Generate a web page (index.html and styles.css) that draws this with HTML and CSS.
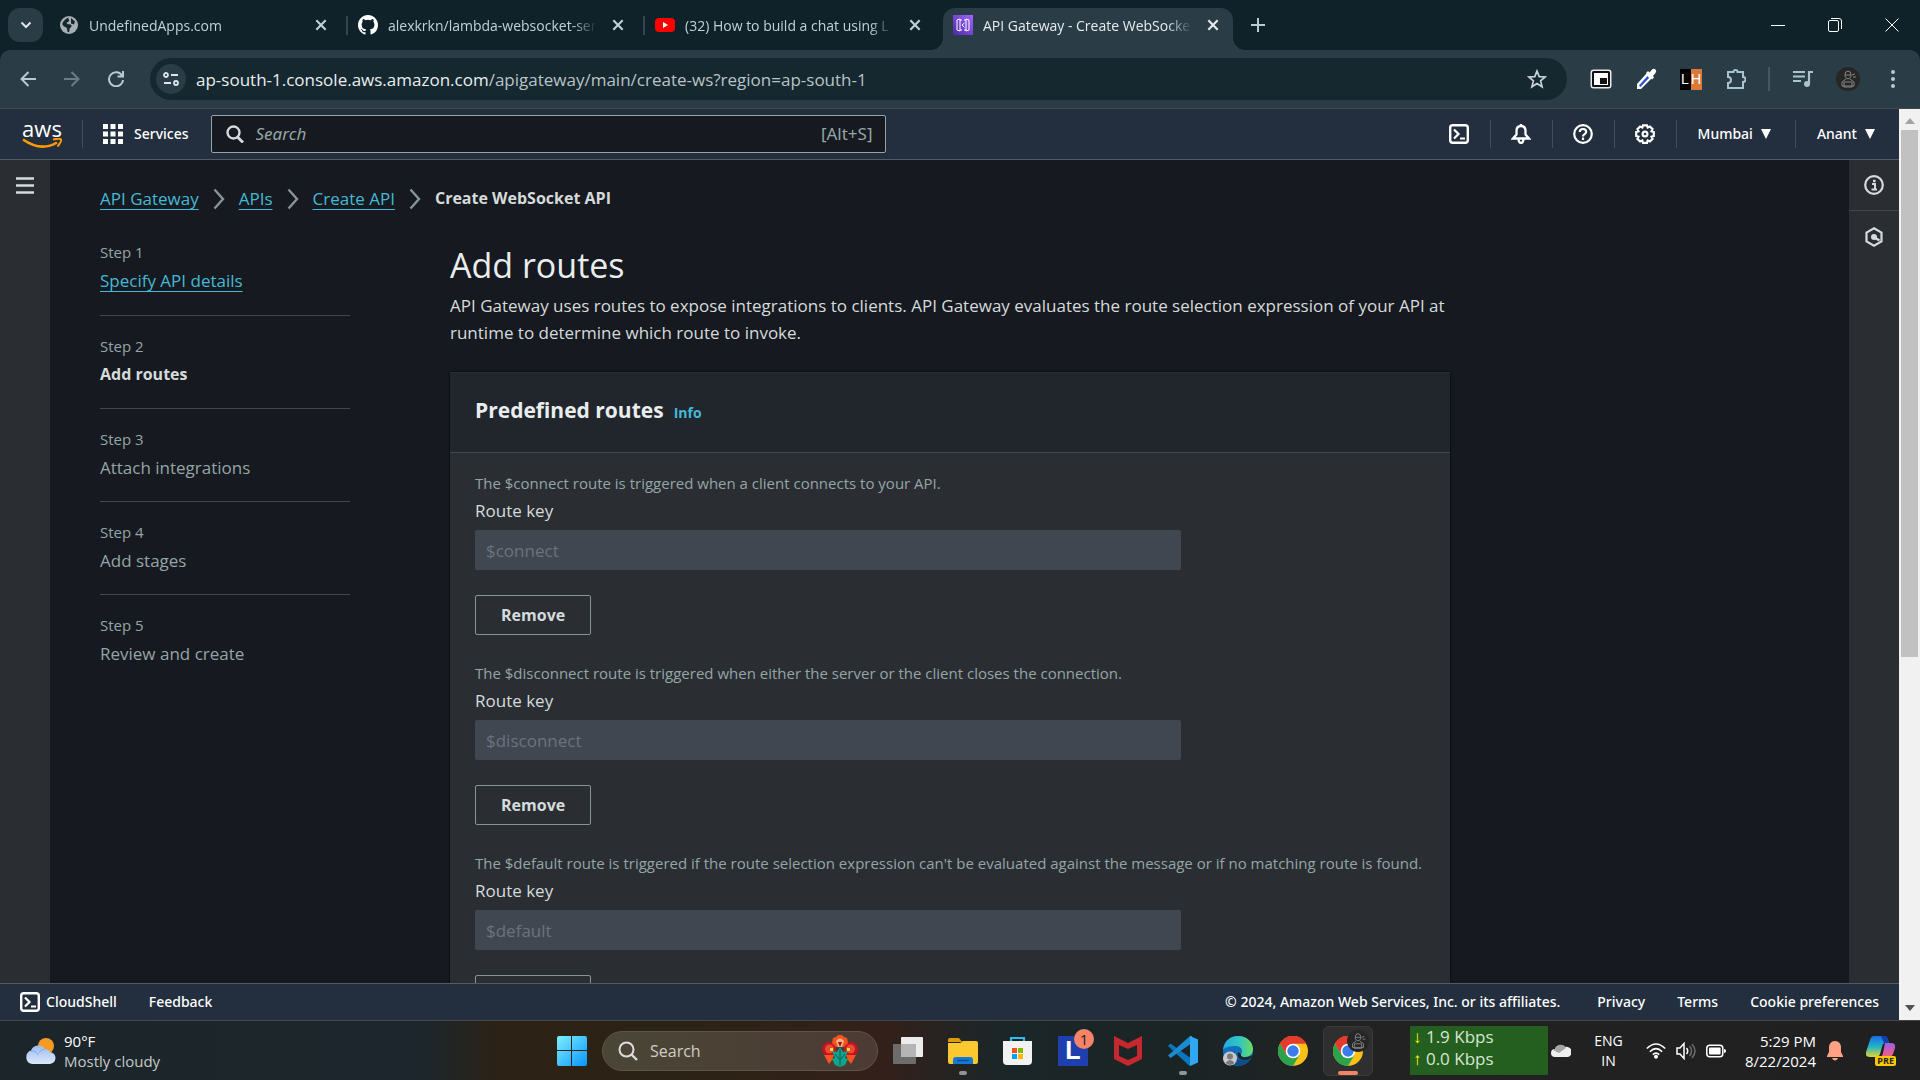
FILE: index.html
```html
<!DOCTYPE html>
<html lang="en">
<head>
<meta charset="utf-8">
<title>API Gateway - Create WebSocket API</title>
<link rel="stylesheet" href="styles.css">
</head>
<body>
<svg class="defs" aria-hidden="true">
  <symbol id="close" viewBox="0 0 12 12"><path d="M2 2l8 8M10 2l-8 8" stroke="currentColor" stroke-width="1.8" fill="none"/></symbol>
  <symbol id="crumb" viewBox="0 0 12 22"><path d="M1.500 1.500l8.500 9.500-8.500 9.500" stroke="#879596" stroke-width="2.400" fill="none"/></symbol>
  <symbol id="shell" viewBox="0 0 20 20"><rect x="1.200" y="1.200" width="17.600" height="17.600" rx="2.500" stroke="currentColor" stroke-width="2.400" fill="none"/><path d="M5 5.500l4.500 4.500L5 14.500M11 14.500h5" stroke="currentColor" stroke-width="2.200" fill="none"/></symbol>
  <symbol id="chrome" viewBox="0 0 30 30"><circle cx="15" cy="15" r="15" fill="#fbc116"/><path d="M15 15L2 7.500A15 15 0 0 1 28 7.500H15z" fill="#e33b2e"/><path d="M2 7.500A15 15 0 0 0 15 30L21.500 18.700 15 15 8.500 18.700z" fill="#2ba24c"/><path d="M2 7.500A15 15 0 0 1 28 7.500H15L8.500 18.700z" fill="#e33b2e"/><circle cx="15" cy="15" r="7.300" fill="#fff"/><circle cx="15" cy="15" r="5.700" fill="#3b7ded"/></symbol>
  <symbol id="ninja" viewBox="0 0 24 24"><circle cx="12" cy="12" r="12" fill="#262626"/><g fill="none" stroke="#858585" stroke-width="1"><path d="M9 8a3 4 0 0 1 6 0c0 5-6 5-6 0zM9 8h6M10 12l-4 3v4h12v-4l-4-3M8 15h8v5H8zM16 8l3-1M17 10h3"/></g></symbol>
  <symbol id="caret" viewBox="0 0 10 10"><path d="M0 0h10L5 10z" fill="currentColor"/></symbol>
</svg>

<header class="tabstrip">
  <button class="tab-search" aria-label="Search tabs"><svg width="12" height="12" viewBox="0 0 12 12"><path d="M1.500 3.500L6 8l4.500-4.500" stroke="#e0e6e8" stroke-width="2" fill="none"/></svg></button>
  <nav class="tabs">
    <div class="tab">
      <svg width="20" height="20" viewBox="0 0 20 20"><circle cx="10" cy="10" r="9" fill="#a7adb3"/><path d="M10 2.500c-2 1 1 2 0 3.500s-3 1-2 2.500 4 0 4.500 2-2 2-2 4-.5 3-1.500 2.500-.5-2-1-3.500-4-2-4.500-4S6 3.500 10 2.500zM12 3l4 3.500-1 3-3-1z" fill="#14262e"/></svg>
      <span class="tab-title">UndefinedApps.com</span>
      <button class="tab-close" aria-label="Close tab"><svg width="14" height="14"><use href="#close"/></svg></button>
    </div>
    <div class="tab">
      <svg width="20" height="20" viewBox="0 0 16 16"><path fill="#fff" d="M8 0C3.580 0 0 3.580 0 8c0 3.540 2.290 6.530 5.470 7.590.4.070.55-.17.55-.38v-1.490c-2.010.37-2.530-.49-2.690-.94-.09-.23-.48-.94-.82-1.130-.28-.15-.68-.52-.01-.53.63-.01 1.080.58 1.230.82.72 1.210 1.870.87 2.330.66.07-.52.28-.87.51-1.070-1.780-.2-3.640-.89-3.640-3.950 0-.87.31-1.590.82-2.150-.08-.2-.36-1.020.08-2.120 0 0 .67-.21 2.200.82a7.600 7.600 0 0 1 4 0c1.530-1.040 2.200-.82 2.200-.82.44 1.100.16 1.920.08 2.120.51.56.82 1.270.82 2.150 0 3.070-1.870 3.750-3.650 3.950.29.25.54.73.54 1.480v2.200c0 .21.15.46.55.38A8 8 0 0 0 16 8c0-4.420-3.580-8-8-8z"/></svg>
      <span class="tab-title">alexkrkn/lambda-websocket-ser</span>
      <button class="tab-close" aria-label="Close tab"><svg width="14" height="14"><use href="#close"/></svg></button>
    </div>
    <div class="tab">
      <svg width="20" height="20" viewBox="0 0 20 20"><rect y="3" width="20" height="14" rx="4" fill="#f00"/><path d="M8 7l5 3-5 3z" fill="#fff"/></svg>
      <span class="tab-title">(32) How to build a chat using L</span>
      <button class="tab-close" aria-label="Close tab"><svg width="14" height="14"><use href="#close"/></svg></button>
    </div>
    <div class="tab active">
      <svg width="20" height="20" viewBox="0 0 20 20"><defs><linearGradient id="gw" x1="0" y1="1" x2="1" y2="0"><stop offset="0" stop-color="#4d27a8"/><stop offset="1" stop-color="#a166ff"/></linearGradient></defs><rect width="20" height="20" fill="url(#gw)"/><path d="M7 4L4 5v10l3 1zM13 4l3 1v10l-3 1zM7 5h2M11 5h2M7 15h2M11 15h2M11.500 8L9 10l2.500 2.500" stroke="#fff" stroke-width="1" fill="none"/></svg>
      <span class="tab-title">API Gateway - Create WebSocke</span>
      <button class="tab-close" aria-label="Close tab"><svg width="14" height="14"><use href="#close"/></svg></button>
    </div>
  </nav>
  <button class="new-tab" aria-label="New tab"><svg width="14" height="14" viewBox="0 0 14 14"><path d="M7 0v14M0 7h14" stroke="#b9cbd4" stroke-width="2"/></svg></button>
  <div class="window-buttons">
    <button aria-label="Minimize"><svg width="14" height="14" viewBox="0 0 14 14"><path d="M0 7.500h14" stroke="#fff"/></svg></button>
    <button aria-label="Restore"><svg width="14" height="14" viewBox="0 0 14 14"><rect x=".5" y="2.500" width="10" height="11" rx="1.500" stroke="#fff" fill="none"/><path d="M3 .5h8q2.500 0 2.500 2.500v8" stroke="#fff" fill="none"/></svg></button>
    <button aria-label="Close window"><svg width="14" height="14" viewBox="0 0 14 14"><path d="M.5.5l13 13M13.500.5l-13 13" stroke="#fff" fill="none"/></svg></button>
  </div>
</header>

<div class="toolbar">
  <div class="nav-buttons">
    <button aria-label="Back"><svg width="16" height="16" viewBox="0 0 16 16"><path d="M16 8H2M8.500 1L1.500 8l7 7" stroke="#b4cad4" stroke-width="2" fill="none"/></svg></button>
    <button aria-label="Forward"><svg width="16" height="16" viewBox="0 0 16 16"><path d="M0 8h14M7.500 1l7 7-7 7" stroke="#6c7d86" stroke-width="2" fill="none"/></svg></button>
    <button aria-label="Reload"><svg width="16" height="16" viewBox="0 0 16 16"><path d="M14 4.500A7 7 0 1 0 15 9M15 0v5.500H9.500" stroke="#b4cad4" stroke-width="2" fill="none"/></svg></button>
  </div>
  <div class="omnibox">
    <button class="site-info" aria-label="Site information"><svg width="16" height="16" viewBox="0 0 16 16" fill="none" stroke="#dce5e9" stroke-width="1.800"><circle cx="3" cy="4" r="2"/><path d="M8 4h7M1 12h7"/><circle cx="13" cy="12" r="2"/></svg></button>
    <span class="url">ap-south-1.console.aws.amazon.com<span class="path">/apigateway/main/create-ws?region=ap-south-1</span></span>
    <button aria-label="Bookmark this tab"><svg width="20" height="20" viewBox="0 0 20 20"><path d="M10 2l2.200 5.600 6 .4-4.600 3.900 1.500 5.900L10 14.500l-5.100 3.300 1.500-5.900L1.800 8l6-.4z" stroke="#c8d2d6" stroke-width="1.700" fill="none"/></svg></button>
  </div>
  <div class="extensions">
    <button aria-label="Picture in picture"><svg width="22" height="20" viewBox="0 0 22 20"><rect x=".5" y=".5" width="21" height="19" rx="3" fill="#e8eaed"/><rect x="2" y="2" width="18" height="16" rx="1.500" fill="#111"/><rect x="4" y="4" width="14" height="12" fill="#fff"/><rect x="10" y="9" width="7" height="6" fill="#111"/></svg></button>
    <button aria-label="Color picker"><svg width="22" height="22" viewBox="0 0 22 22"><path d="M12 5L2 16v5h4L17 10z" fill="#fff"/><path d="M12.500 8L4 17.500l1.500 1.500L14 10z" fill="#2a4fd0"/><path d="M11 5l2-2 1.500 1.500L17 1.500q2-1.500 3.500 0t0 3.500L18 8l1 1.500-2 2z" fill="#fff"/></svg></button>
    <button class="lh" aria-label="LH"><span>L</span><span>H</span></button>
    <button aria-label="Extensions"><svg width="20" height="22" viewBox="0 0 20 22"><path d="M2 4h5.500a2 2 0 0 1 4 0H17v5a2.500 2.500 0 0 1 0 5v6H2v-5a3 3 0 0 0 0-6z" fill="none" stroke="#a9c3cf" stroke-width="2"/></svg></button>
    <i class="divider"></i>
    <button aria-label="Media controls"><svg width="20" height="18" viewBox="0 0 20 18"><path d="M0 2h12M0 6.500h12M0 11h8" stroke="#a9c3cf" stroke-width="2"/><path d="M16 14V2h4" stroke="#a9c3cf" stroke-width="2.200" fill="none"/><circle cx="14" cy="14" r="3" fill="#a9c3cf"/></svg></button>
    <button aria-label="Profile"><svg width="24" height="24"><use href="#ninja"/></svg></button>
    <button aria-label="Menu"><svg width="6" height="20" viewBox="0 0 6 20" fill="#b4cad4"><circle cx="3" cy="3" r="2"/><circle cx="3" cy="10" r="2"/><circle cx="3" cy="17" r="2"/></svg></button>
  </div>
</div>

<div class="viewport">
  <div class="page">
    <header class="aws-nav">
      <a class="aws-logo" href="#" aria-label="AWS"><span>aws</span><svg width="40" height="11" viewBox="0 0 40 11"><path d="M1 1.500Q19 14 35 4.500" stroke="#f90" stroke-width="2.600" fill="none"/><path d="M31 1.500q7-1.500 8 0t-3.500 7" stroke="#f90" stroke-width="2" fill="none"/></svg></a>
      <i class="divider"></i>
      <button class="services"><svg width="20" height="20" viewBox="0 0 20 20" fill="#fff"><path d="M0 0h5v5H0zM7.500 0h5v5h-5zM15 0h5v5h-5zM0 7.500h5v5H0zM7.500 7.500h5v5h-5zM15 7.500h5v5h-5zM0 15h5v5H0zM7.500 15h5v5h-5zM15 15h5v5h-5z"/></svg>Services</button>
      <label class="aws-search"><svg width="18" height="18" viewBox="0 0 18 18"><circle cx="7.500" cy="7.500" r="6" stroke="#d5dbdb" stroke-width="2.400" fill="none"/><path d="M11.500 12l5.500 5.500" stroke="#d5dbdb" stroke-width="2.800"/></svg><input type="text" placeholder="Search" aria-label="Search"><span>[Alt+S]</span></label>
      <div class="aws-tools">
        <button aria-label="CloudShell"><svg width="20" height="20"><use href="#shell"/></svg></button>
        <button aria-label="Notifications"><svg width="20" height="20" viewBox="0 0 20 20" fill="none" stroke="#fff" stroke-width="2.300"><path d="M10 2C6.500 2 5.500 4.500 5.500 7v3.500L2 14.500h16l-3.500-4V7c0-2.500-1-5-4.500-5zM10 0v2M7.500 15a2.500 4 0 0 0 5 0"/></svg></button>
        <button aria-label="Support"><svg width="20" height="20" viewBox="0 0 20 20" fill="none" stroke="#fff" stroke-width="2.200"><circle cx="10" cy="10" r="8.800"/><path d="M6.800 8c0-4 6.400-4 6.400 0 0 2.300-3.200 2-3.200 4.500M10 13.500V16"/></svg></button>
        <button aria-label="Settings"><svg width="20" height="20" viewBox="0 0 20 20" fill="none" stroke="#fff" stroke-width="2.200"><path d="M8 1.300h4l.7 2.200 2.200-1 2.600 2.600-1 2.200 2.300.7v4l-2.300.7 1 2.200-2.600 2.600-2.200-1-.7 2.300H8l-.7-2.300-2.200 1-2.600-2.600 1-2.200-2.300-.7V8l2.300-.7-1-2.200 2.600-2.600 2.200 1z"/><circle cx="10" cy="10" r="2.400"/></svg></button>
        <button class="menu">Mumbai<svg width="10" height="10"><use href="#caret"/></svg></button>
        <button class="menu">Anant<svg width="10" height="10"><use href="#caret"/></svg></button>
      </div>
    </header>

    <div class="workspace">
      <aside class="rail left"><button aria-label="Open navigation"><svg width="18" height="18" viewBox="0 0 18 18"><path d="M0 1.500h18M0 8.500h18M0 15.500h18" stroke="#d5dbdb" stroke-width="2.600"/></svg></button></aside>
      <main class="content">
        <nav class="breadcrumb" aria-label="Breadcrumb">
          <a href="#">API Gateway</a><svg width="12" height="22"><use href="#crumb"/></svg>
          <a href="#">APIs</a><svg width="12" height="22"><use href="#crumb"/></svg>
          <a href="#">Create API</a><svg width="12" height="22"><use href="#crumb"/></svg>
          <strong>Create WebSocket API</strong>
        </nav>
        <div class="wizard">
          <ol class="steps">
            <li><small>Step 1</small><a href="#">Specify API details</a></li>
            <li><small>Step 2</small><strong>Add routes</strong></li>
            <li><small>Step 3</small><span>Attach integrations</span></li>
            <li><small>Step 4</small><span>Add stages</span></li>
            <li><small>Step 5</small><span>Review and create</span></li>
          </ol>
          <section class="form">
            <h1>Add routes</h1>
            <p class="intro">API Gateway uses routes to expose integrations to clients. API Gateway evaluates the route selection expression of your API at runtime to determine which route to invoke.</p>
            <div class="card">
              <div class="card-head"><h2>Predefined routes</h2><a href="#">Info</a></div>
              <div class="card-body">
                <div class="route"><p>The $connect route is triggered when a client connects to your API.</p><label for="r1">Route key</label><input id="r1" value="$connect" disabled><button>Remove</button></div>
                <div class="route"><p>The $disconnect route is triggered when either the server or the client closes the connection.</p><label for="r2">Route key</label><input id="r2" value="$disconnect" disabled><button>Remove</button></div>
                <div class="route"><p>The $default route is triggered if the route selection expression can't be evaluated against the message or if no matching route is found.</p><label for="r3">Route key</label><input id="r3" value="$default" disabled><button>Remove</button></div>
              </div>
            </div>
          </section>
        </div>
      </main>
      <aside class="rail right">
        <button aria-label="Info"><svg width="20" height="20" viewBox="0 0 20 20"><circle cx="10" cy="10" r="8.800" stroke="#d5dbdb" stroke-width="2.200" fill="none"/><path d="M8 9h3v5M7.500 14.500h5.500" stroke="#d5dbdb" stroke-width="2" fill="none"/><rect x="9" y="4.800" width="2.600" height="2.400" fill="#d5dbdb"/></svg></button>
        <button aria-label="Amazon Q"><svg width="20" height="20" viewBox="0 0 20 20"><path d="M10 1.300l7.500 4.300v8.800L10 18.700l-7.500-4.300V5.600z" stroke="#d5dbdb" stroke-width="2.200" fill="none"/><circle cx="10" cy="10" r="3" fill="#d5dbdb"/><path d="M10.500 10.500l5 3" stroke="#d5dbdb" stroke-width="2.500"/></svg></button>
      </aside>
    </div>

    <footer class="aws-footer">
      <button><svg width="20" height="20"><use href="#shell"/></svg>CloudShell</button>
      <a class="feedback" href="#">Feedback</a>
      <span class="legal">© 2024, Amazon Web Services, Inc. or its affiliates.</span>
      <a href="#">Privacy</a><a href="#">Terms</a><a href="#">Cookie preferences</a>
    </footer>
  </div>
  <div class="scrollbar" aria-hidden="true"><svg width="10" height="6" viewBox="0 0 10 6"><path d="M0 6L5 0l5 6z" fill="#a3a3a3"/></svg><i></i><svg class="down" width="10" height="6" viewBox="0 0 10 6"><path d="M0 0l5 6 5-6z" fill="#505050"/></svg></div>
</div>

<footer class="taskbar">
  <div class="weather">
    <svg width="32" height="28" viewBox="0 0 32 28"><defs><linearGradient id="cl" x1="0" y1="0" x2="0" y2="1"><stop offset="0" stop-color="#9dbcf0"/><stop offset="1" stop-color="#dce8fb"/></linearGradient></defs><circle cx="22" cy="9" r="8" fill="#f59a23"/><path d="M8 27a7 7 0 0 1-1-13.500A8 8 0 0 1 21 12a6 6 0 0 1 5 3 6 6 0 0 1-1 12z" fill="url(#cl)"/><path d="M7 14a6 6 0 0 1 7 4M21 12a7 7 0 0 0-6 4" stroke="#86a8e2" fill="none"/></svg>
    <div>90°F<span>Mostly cloudy</span></div>
  </div>
  <div class="apps">
    <button aria-label="Start"><svg width="30" height="30" viewBox="0 0 30 30"><defs><linearGradient id="wn" x1="0" y1="0" x2="1" y2="1"><stop offset="0" stop-color="#7df0ff"/><stop offset="1" stop-color="#0a94ff"/></linearGradient></defs><path d="M0 2q0-2 2-2h12v14H0zM15 0h13q2 0 2 2v12H15zM0 15h14v15H2q-2 0-2-2zM15 15h15v13q0 2-2 2H15z" fill="url(#wn)"/></svg></button>
    <label class="task-search"><svg width="20" height="20" viewBox="0 0 20 20"><circle cx="8.500" cy="8.500" r="7" stroke="#dcdcdc" stroke-width="2" fill="none"/><path d="M13.500 13.500l5.500 5.500" stroke="#dcdcdc" stroke-width="2.400"/></svg><input type="text" placeholder="Search" aria-label="Search Windows"><svg width="36" height="32" viewBox="0 0 36 32"><g fill="#c3141c"><circle cx="7" cy="14" r="7"/><circle cx="29" cy="14" r="7"/></g><g fill="#f4551f"><path d="M10 8l1-5 3-1 2-2h4l2 2 3 1 1 5-4 4h-8zM2 20h10l-2 5-3 4zM34 20H24l2 5 3 4z"/></g><circle cx="7.500" cy="14" r="4.500" fill="#e9483c"/><circle cx="28.500" cy="14" r="4.500" fill="#e9483c"/><path d="M14 6q4-5 8 0l-2 6h-4z" fill="#ffb08a"/><path d="M16 7h4l-2 5z" fill="#8f1315"/><path d="M18 12l3 5 5-1-3 7 3 1-3 6-5 2-5-2-3-6 3-1-3-7 5 1z" fill="#13a58b"/><path d="M18 14v17M13 19l5 6 5-6" stroke="#075e5e" fill="none"/><path d="M8 13h3v3H8zM25 13h3v3h-3z" fill="#ffd51f"/></svg></label>
    <button aria-label="Task view"><svg width="30" height="28" viewBox="0 0 30 28"><rect x="8" y="0" width="22" height="20" rx="1" fill="#ececec"/><rect y="7" width="23" height="20" rx="1" fill="#6c6c6c"/><rect x="8" y="7" width="15" height="13" fill="#b5b5b5"/></svg></button>
    <button class="running" aria-label="File Explorer"><svg width="30" height="28" viewBox="0 0 30 28"><path d="M0 3q0-2 2-2h9l3 4H0z" fill="#dd9d0b"/><path d="M0 6h12l3-2h13q2 0 2 2v19q0 2-2 2H2q-2 0-2-2z" fill="#fcc82f"/><path d="M5 27v-4q0-3 3-3h14q3 0 3 3v4z" fill="#1279d6"/><path d="M9 23.500h12" stroke="#0b4f9b" stroke-width="1.500"/></svg></button>
    <button aria-label="Microsoft Store"><svg width="30" height="30" viewBox="0 0 30 30"><path d="M8 6V2h13v4" stroke="#2bbdf2" stroke-width="2.200" fill="none"/><path d="M0 5h29v20q0 4-4 4H4q-4 0-4-4z" fill="#f2f2f2"/><path d="M9 12h5v5H9z" fill="#f25022"/><path d="M15 12h5v5h-5z" fill="#7fba00"/><path d="M9 18h5v5H9z" fill="#00a4ef"/><path d="M15 18h5v5h-5z" fill="#ffb900"/></svg></button>
    <button class="l-app" aria-label="L"><span>L</span><b>1</b></button>
    <button aria-label="McAfee"><svg width="28" height="30" viewBox="0 0 28 30"><path d="M0 0l14 7L28 0v23l-14 7-14-7zM5 9v11l9 4 9-4V9l-9 4z" fill="#c5282d" fill-rule="evenodd"/></svg></button>
    <button class="running" aria-label="Visual Studio Code"><svg width="30" height="30" viewBox="0 0 30 30"><path d="M0 10l2.500-2.500L24 23v5.500L21.500 30z" fill="#0b76bd"/><path d="M0 19.500L2.500 22 24 7V0h-2z" fill="#1a8ad2"/><path d="M22 0l8 3.500v23L22 30z" fill="#2fa7f2"/></svg></button>
    <button aria-label="Microsoft Edge"><svg width="30" height="30" viewBox="0 0 30 30"><defs><linearGradient id="ed" x1="0" y1="0" x2="1" y2="0"><stop offset="0" stop-color="#25a8e0"/><stop offset=".5" stop-color="#2fc3c9"/><stop offset="1" stop-color="#69dc62"/></linearGradient></defs><circle cx="15" cy="15" r="15" fill="#1170bd"/><path d="M0 14C1 5 7 0 15 0c9 0 15 6 15 13 0 5-4 8-8 8-5 0-5-2-4-3 3-3 0-8-5-8C7 10 2 11 0 14z" fill="url(#ed)"/><path d="M12 15c-2 6 4 12 15 8-3 5-9 8-15 6-6-3-5-12 0-14z" fill="#114b8b"/><path d="M18 18c-1 3 4 5 12 1l-3 4c-9 3-14-1-12-7z" fill="#1c2426"/><circle cx="7" cy="22.500" r="7" fill="#c9c9c9"/><circle cx="7" cy="20.500" r="3" fill="#7a7a7a"/><path d="M2.500 27q4.500-6 9 0-4.500 4-9 0z" fill="#7a7a7a"/></svg></button>
    <button aria-label="Google Chrome"><svg width="30" height="30"><use href="#chrome"/></svg></button>
    <button class="current" aria-label="Google Chrome, second profile"><svg width="30" height="30"><use href="#chrome"/></svg><svg class="profile" width="22" height="22"><use href="#ninja"/></svg></button>
  </div>
  <div class="tray">
    <div class="speed"><span><i>↓</i> 1.9 Kbps</span><span><i>↑</i> 0.0 Kbps</span></div>
    <svg class="onedrive" width="20" height="14" viewBox="0 0 20 14"><path d="M4 13a4 4 0 0 1 0-8 6 6 0 0 1 10-2 5 5 0 0 1 3 10z" fill="#efefef"/><path d="M4 5a6 6 0 0 1 11-1l-7 5-6-3z" fill="#a5a5a5"/></svg>
    <div class="lang">ENG<span>IN</span></div>
    <div class="status">
      <svg width="20" height="16" viewBox="0 0 20 16" fill="none" stroke="#fff" stroke-width="1.600"><path d="M.8 5.500q9.200-9 18.400 0M3.800 8.700q6.200-6 12.400 0M6.800 11.700q3.200-3 6.400 0"/><circle cx="10" cy="13.800" r="1.200" fill="#fff"/></svg>
      <svg width="20" height="18" viewBox="0 0 20 18" fill="none" stroke="#fff" stroke-width="1.500"><path d="M1 6h3l4-4.500v15L4 12H1z"/><path d="M10.500 6q2.500 3 0 6"/><path d="M13.500 4q4 5 0 10M16 2q6 7 0 14" stroke="#6c6c6c"/></svg>
      <svg width="20" height="14" viewBox="0 0 20 14"><rect x=".8" y="1.300" width="16" height="11.400" rx="3" stroke="#fff" stroke-width="1.500" fill="none"/><rect x="3" y="3.500" width="11.600" height="7" rx="1" fill="#fff"/><path d="M18 5q2 0 2 2t-2 2z" fill="#fff"/></svg>
    </div>
    <div class="clock">5:29 PM<span>8/22/2024</span></div>
    <svg class="bell" width="16" height="20" viewBox="0 0 16 20"><path d="M8 0C4 0 2 3 2 6.500V11l-2 4v1h16v-1l-2-4V6.500C14 3 12 0 8 0z" fill="#ffa184"/><path d="M5 17h6q-1 2.500-3 2.500T5 17z" fill="#ffa184"/></svg>
    <button class="copilot" aria-label="Copilot"><svg width="30" height="22" viewBox="0 0 30 22"><defs><linearGradient id="c1" x1="0" y1="0" x2="0" y2="1"><stop offset="0" stop-color="#1a6be8"/><stop offset=".5" stop-color="#21b3c7"/><stop offset="1" stop-color="#e5d531"/></linearGradient><linearGradient id="c2" x1="0" y1="0" x2="0" y2="1"><stop offset="0" stop-color="#a05be8"/><stop offset="1" stop-color="#f7607d"/></linearGradient></defs><path d="M8 0h10q3 0 4 4l1 3h-4q-2 0-3 4l-2 7q-1 3-4 3H4q-5 0-4-5L4 4q1-4 4-4z" fill="url(#c1)"/><path d="M17 0q4 0 5 4l1 3h-5l-3-7z" fill="#123fae"/><path d="M19 7h6q5 0 4 5l-2 6q-1 3-5 3h-8q2 0 3-4z" fill="url(#c2)"/></svg><b>PRE</b></button>
  </div>
</footer>
</body>
</html>
```
FILE: styles.css
```css
* { box-sizing: border-box; }
html, body { height: 100%; margin: 0; }
body { display: flex; flex-direction: column; overflow: hidden; background: #0f222a; color: #d5dbdb; font: 17px/27px "Open Sans", "Noto Sans", sans-serif; }
button { border: 0; padding: 0; background: none; color: inherit; font: inherit; display: flex; align-items: center; justify-content: center; }
input { font: inherit; color: inherit; min-width: 0; }
svg { display: block; flex: none; }
.defs { position: absolute; width: 0; height: 0; }
h1, h2, p, ol { margin: 0; padding: 0; }
a { color: #44b9d6; }
input::placeholder { color: inherit; opacity: 1; }

/* Browser tabs */
.tabstrip, .toolbar, .taskbar { flex: none; }
.tabstrip { display: flex; height: 50px; color: #c3d0d6; font-size: 14px; }
.tab-search { width: 35px; height: 34px; margin: 8px 6px 0 8px; border-radius: 12px; background: #2a3c45; }
.tabs { display: flex; }
.tab { position: relative; display: flex; align-items: center; gap: 10px; width: 297px; padding: 0 18px 0 10px; }
.tab-title { flex: 1; overflow: hidden; white-space: nowrap; mask-image: linear-gradient(to right, #000 88%, transparent 100%); }
.tab-close { width: 14px; height: 50px; margin-left: 4px; }
.tab + .tab:not(.active) { padding-left: 12px; background: linear-gradient(#334650, #334650) no-repeat 0 16px / 2px 19px; }
.tab.active { margin-top: 8px; margin-left: 3px; width: 290px; padding: 0 13px 8px 10px; border-radius: 12px 12px 0 0; background: #2a3c45; color: #e6ecee; }
.tab.active .tab-close { height: 34px; }
.tab.active::before, .tab.active::after { content: ""; position: absolute; bottom: 0; width: 12px; height: 12px; }
.tab.active::before { left: -12px; background: radial-gradient(circle at 0 0, transparent 12px, #2a3c45 12px); }
.tab.active::after { right: -12px; background: radial-gradient(circle at 100% 0, transparent 12px, #2a3c45 12px); }
.new-tab { width: 50px; height: 42px; }
.window-buttons { display: flex; margin-left: auto; }
.window-buttons button { width: 57px; height: 49px; }
.new-tab { height: 50px; }

/* Address bar */
.toolbar { display: flex; align-items: center; height: 59px; padding: 0 5px 0 6px; border-bottom: 1px solid #46474a; background: #2a3c45; border-radius: 10px 10px 0 0; }
.nav-buttons { display: flex; }
.nav-buttons button { width: 44px; height: 40px; }
.omnibox { flex: 1; display: flex; align-items: center; height: 42px; margin-left: 12px; padding: 0 20px 0 6px; border-radius: 21px; background: #15272f; }
.site-info { width: 30px; height: 30px; margin-right: 10px; border-radius: 50%; background: #2a3c45; }
.url { flex: 1; color: #e8eef0; }
.path { color: #b9c3c7; }
.extensions { display: flex; align-items: center; margin-left: 11px; }
.extensions button { width: 45px; height: 40px; }
.extensions .divider { width: 2px; height: 24px; margin: 0 10px; background: #435964; }
.extensions .lh { color: #fff; font: 14px/21px "Liberation Sans", sans-serif; }
.lh span { width: 11px; background: #000; text-align: center; }
.lh span + span { background: #d9793a; }

/* Web page */
.viewport { flex: 1; min-height: 0; display: flex; background: #16191f; }
.page { flex: 1; min-width: 0; display: flex; flex-direction: column; }
.scrollbar { flex: none; display: flex; flex-direction: column; align-items: center; width: 21px; padding: 9px 0; background: #f1f1f1; }
.scrollbar i { width: 17px; height: 59%; margin-top: 6px; background: #c1c1c1; }
.scrollbar .down { margin-top: auto; }

.aws-nav, .aws-footer { flex: none; display: flex; align-items: center; background: #232f3e; color: #fff; font: 500 14px/20px "Noto Sans", sans-serif; }
.aws-nav { height: 51px; padding-left: 22px; border-bottom: 1px solid #545b64; }
.aws-logo { display: flex; flex-direction: column; align-items: center; width: 40px; color: #fff; text-decoration: none; font: 500 22px/17px "Open Sans", sans-serif; }
.aws-logo svg { margin-top: 1px; }
.aws-nav > .divider { width: 1px; height: 28px; margin: 0 20px; background: #414d5c; }
.services { gap: 11px; }
.aws-search { display: flex; align-items: center; gap: 12px; width: 675px; height: 38px; margin-left: 22px; padding: 0 12px 0 14px; border: 1px solid #95a5a6; border-radius: 2px; background: #16191f; color: #95a5a6; font-size: 17px; font-weight: 400; }
.aws-search input { flex: 1; border: 0; padding: 0; background: none; font-style: italic; }
.aws-tools { display: flex; align-items: center; margin-left: auto; }
.aws-tools button { width: 62px; height: 28px; }
.aws-tools button + button { border-left: 1px solid #414d5c; }
.aws-tools .menu { width: auto; gap: 8px; padding: 0 24px 0 21px; }

.workspace { flex: 1; min-height: 0; display: flex; }
.rail { flex: none; width: 50px; background: #2a2e33; }
.rail button { width: 50px; height: 51px; }
.rail.right button:first-child { border-bottom: 1px solid #414750; }
.content { flex: 1; min-width: 0; overflow: hidden; padding: 25px 50px 0; }
.breadcrumb { display: flex; align-items: center; }
.breadcrumb svg { margin: 0 14px; }
.breadcrumb a, .steps a { text-underline-offset: 4px; text-decoration-thickness: 1px; }
.wizard { display: grid; grid-template-columns: 250px minmax(0, 1000px); gap: 100px; padding-top: 26px; }
.steps { list-style: none; color: #95a5a6; }
.steps li { display: flex; flex-direction: column; height: 77px; }
.steps li + li { height: 93px; border-top: 1px solid #414750; padding-top: 16px; }
.steps small { font-size: 15px; line-height: 29px; }
.steps strong, .breadcrumb strong { color: #d5dbdb; font-size: 16px; }
.steps a, .steps span, .steps strong { align-self: flex-start; }
h1 { color: #eaeded; font-weight: 400; font-size: 34px; line-height: 54px; }
.intro { padding-bottom: 26px; }
.card { background: #2a2e33; box-shadow: 0 0 2px #000; }
.card-head { display: flex; align-items: baseline; gap: 10px; height: 81px; padding: 23px 25px; border-top: 1px solid #2a2e33; border-bottom: 1px solid #414750; background: #21252c; }
h2 { color: #eaeded; font-size: 21px; line-height: 28px; }
.card-head a { font-size: 14px; font-weight: 700; text-decoration: none; }
.card-body { padding: 16px 25px; }
.route { display: flex; flex-direction: column; align-items: flex-start; margin-bottom: 24px; }
.route p { color: #95a5a6; font-size: 15px; line-height: 28px; }
.route input { width: 706px; max-width: 100%; height: 40px; margin: 6px 0 25px; padding: 0 11px; border: 0; border-radius: 2px; background: #414750; color: #68737f; }
.route button { height: 40px; padding: 0 25px; border: 1px solid #879596; border-radius: 2px; font-size: 16px; font-weight: 700; }

.aws-footer { gap: 32px; height: 37px; padding: 0 20px; border-top: 1px solid #545b64; }
.aws-footer a { color: inherit; text-decoration: none; }
.aws-footer button { gap: 6px; }
.legal { margin: 0 5px 0 auto; }

/* Windows taskbar */
.taskbar { display: grid; grid-template-columns: 1fr auto 1fr; align-items: center; height: 60px; border-top: 1px solid #46474a; color: #fff; font-size: 15px; line-height: 20px; background: linear-gradient(to right, #1c2529 0%, #1c262c 22%, #2c2215 26%, #2b2315 35%, #33201a 46%, #1b2628 52%, #1b2425 62%, #222 72%, #202020 100%); }
.weather { display: flex; align-items: center; gap: 8px; padding-left: 24px; }
.weather span, .lang span, .clock span { display: block; }
.weather span { color: #c5c9cb; }
.apps { display: flex; align-items: center; gap: 5px; }
.apps button { position: relative; width: 50px; height: 50px; border-radius: 6px; }
.running::after, .current::after { content: ""; position: absolute; bottom: 1px; width: 8px; height: 4px; border-radius: 2px; background: #8f9698; }
.apps .current { background: #2f2f2f; border: 1px solid #3a3a3a; }
.current::after { width: 20px; bottom: 0; background: #f48468; }
.current .profile { position: absolute; top: 3px; right: 3px; }
.task-search { display: flex; align-items: center; width: 276px; height: 40px; padding: 0 19px 0 15px; border: 1px solid #5d5648; border-radius: 20px; background: linear-gradient(to right, #4a4636, #4c3b34); color: #d0ccc6; font-size: 16px; }
.task-search input { flex: 1; margin-left: 12px; padding: 0; border: 0; background: none; }
.apps .l-app span { width: 30px; height: 30px; background: #1f3fae; color: #fff; font: 700 25px/28px "Liberation Sans", sans-serif; }
.l-app b { position: absolute; top: 3px; right: 4px; width: 20px; height: 20px; border-radius: 50%; background: #f48468; color: #2a1a16; font-weight: 400; }
.tray { display: flex; align-items: center; justify-content: flex-end; padding-right: 24px; }
.speed { display: flex; flex-direction: column; width: 138px; height: 49px; padding-left: 3px; background: #255f1f; color: #d6e6d2; font-size: 17px; line-height: 22px; white-space: nowrap; }
.speed i { color: #ff0; font-style: normal; font-weight: 700; }
.onedrive { margin-left: 3px; }
.lang { width: 75px; text-align: center; font-size: 14px; }
.status { display: flex; align-items: center; gap: 10px; }
.clock { width: 90px; text-align: right; }
.bell { margin: 0 23px 0 11px; }
.copilot { position: relative; width: 30px; height: 30px; align-items: flex-start; }
.copilot b { position: absolute; right: 0; bottom: 0; padding: 0 2px; border-radius: 2px; background: #ffc800; color: #222; font-size: 9px; line-height: 10px; }
```
